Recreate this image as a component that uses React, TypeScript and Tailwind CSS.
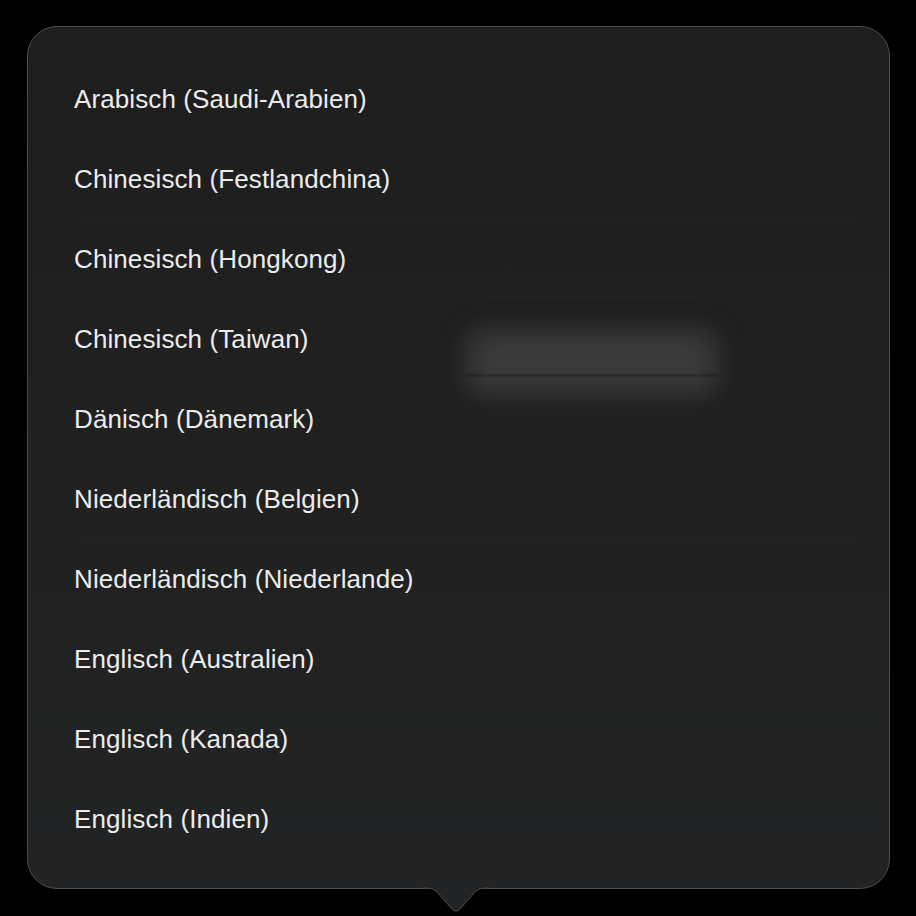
const languages = [
  "Arabisch (Saudi-Arabien)",
  "Chinesisch (Festlandchina)",
  "Chinesisch (Hongkong)",
  "Chinesisch (Taiwan)",
  "Dänisch (Dänemark)",
  "Niederländisch (Belgien)",
  "Niederländisch (Niederlande)",
  "Englisch (Australien)",
  "Englisch (Kanada)",
  "Englisch (Indien)",
];

export default function App() {
  return (
    <div className="h-[916px] w-[916px] bg-black pl-[27px] pt-[26px] font-['Liberation_Sans',Arial,sans-serif]">
      <div className="relative h-[863px] w-[863px]">
        <div className="h-full w-full overflow-hidden rounded-[30px] border border-[#4d4d4d] bg-gradient-to-b from-[#1e1e1e] to-[#222324] pb-[29px] pl-[46px] pr-[28px] pt-[32px]">
          <ul className="flex flex-col">
            {languages.map((name, i) => (
              <li
                key={name}
                className={`flex h-[80px] items-center text-[26px] leading-none tracking-[0.1px] text-[#ececec] ${
                  i < languages.length - 1 ? "border-b border-white/[0.015]" : ""
                }`}
              >
                {name}
              </li>
            ))}
          </ul>
        </div>

        {/* blurred highlight left over from the capture */}
        <div className="pointer-events-none absolute left-[440px] top-[304px] h-[64px] w-[250px] rounded-[16px] bg-[#3a3a3a] blur-[12px]" />
        <div className="pointer-events-none absolute left-[440px] top-[349px] h-px w-[250px] bg-[#151515] blur-[1px]" />

        <svg
          className="absolute left-[396px] top-[861px]"
          width="66"
          height="26"
          viewBox="0 0 66 26"
        >
          <path
            d="M0 1 C8 1 11 2 15 6 L29 22 Q33 26 37 22 L51 6 C55 2 58 1 66 1 L66 0 L0 0 Z"
            fill="#222324"
          />
          <path
            d="M0 1 C8 1 11 2 15 6 L29 22 Q33 26 37 22 L51 6 C55 2 58 1 66 1"
            fill="none"
            stroke="#4d4d4d"
            strokeWidth="1"
          />
        </svg>
      </div>
    </div>
  );
}
